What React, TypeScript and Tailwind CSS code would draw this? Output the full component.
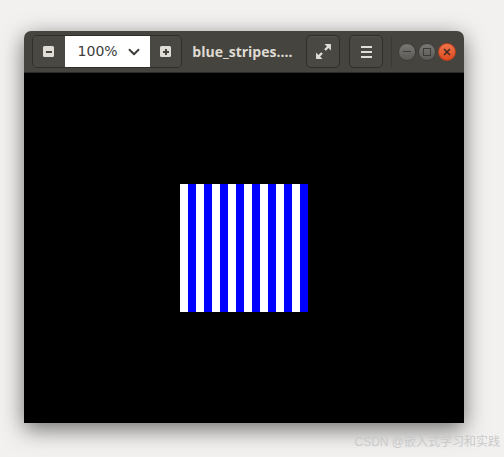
import { ChevronDown } from 'lucide-react';

const stripes = Array.from({ length: 16 }, (_, i) => i);

function ToolButton({ children }: { children: React.ReactNode }) {
  return (
    <div className="w-[34px] h-[33px] rounded-[5px] border border-[#2f2e2a] bg-[#4a4843] shadow-[inset_0_1px_0_rgba(255,255,255,0.06)] flex items-center justify-center">
      {children}
    </div>
  );
}

export default function App() {
  return (
    <div className="w-[504px] h-[457px] bg-[#f2f1f0] relative overflow-hidden font-['DejaVu_Sans',sans-serif]">
      <div className="absolute left-[24px] top-[31px] w-[440px] h-[392px] rounded-t-[7px] shadow-[0_6px_22px_rgba(0,0,0,0.55)] flex flex-col overflow-hidden">
        {/* header bar */}
        <div className="h-[42px] bg-[#45443f] flex items-center pl-[8px] pr-[8px] shrink-0 border-b border-[#2b2a27]">
          <div className="flex h-[33px] rounded-[5px] border border-[#2f2e2a] overflow-hidden">
            <div className="w-[32px] bg-[#4a4843] flex items-center justify-center">
              <div className="w-[11px] h-[11px] rounded-[1.5px] bg-[#e0ddd6] flex items-center justify-center">
                <div className="w-[6px] h-[2px] bg-[#45443f]" />
              </div>
            </div>
            <div className="w-[86px] bg-white flex items-center pl-[13px] pr-[7px] justify-between">
              <span className="text-[14px] text-[#3c3c3c]">100%</span>
              <ChevronDown size={18} strokeWidth={2.5} className="text-[#3c3b37]" />
            </div>
            <div className="w-[32px] bg-[#4a4843] flex items-center justify-center">
              <div className="w-[11px] h-[11px] rounded-[1.5px] bg-[#e0ddd6] relative flex items-center justify-center">
                <div className="w-[6px] h-[2px] bg-[#45443f]" />
                <div className="absolute w-[2px] h-[6px] bg-[#45443f]" />
              </div>
            </div>
          </div>
          <span className="ml-[10px] w-[115px] text-[14px] font-bold text-[#dfdbd2] font-['Open_Sans',sans-serif] whitespace-nowrap">
            blue_stripes....
          </span>
          <div className="flex items-center gap-[9px]">
            <ToolButton>
              <svg width="17" height="17" viewBox="0 0 16 16" fill="#e0ddd6">
                <path d="M9 1h6v6l-2.2-2.2-2.6 2.6-1.6-1.6 2.6-2.6z" />
                <path d="M7 15H1V9l2.2 2.2 2.6-2.6 1.6 1.6-2.6 2.6z" />
              </svg>
            </ToolButton>
            <ToolButton>
              <div className="flex flex-col gap-[3px]">
                <div className="w-[11px] h-[2px] bg-[#e0ddd6]" />
                <div className="w-[11px] h-[2px] bg-[#e0ddd6]" />
                <div className="w-[11px] h-[2px] bg-[#e0ddd6]" />
              </div>
            </ToolButton>
          </div>
          <div className="ml-[8px] w-px h-[30px] bg-[#3a3935]" />
          <div className="ml-[6px] flex items-center gap-[2px]">
            <div className="w-[18px] h-[18px] rounded-full bg-gradient-to-b from-[#7a7874] to-[#5b5a56] border border-[#3d3c38] flex items-center justify-center">
              <div className="w-[8px] h-[1.5px] bg-[#3c3b37]" />
            </div>
            <div className="w-[18px] h-[18px] rounded-full bg-gradient-to-b from-[#7a7874] to-[#5b5a56] border border-[#3d3c38] flex items-center justify-center">
              <div className="w-[8px] h-[8px] border-[1.5px] border-[#3c3b37]" />
            </div>
            <div className="w-[18px] h-[18px] rounded-full bg-gradient-to-b from-[#f0744a] to-[#dc4a1d] border border-[#b8401c] flex items-center justify-center">
              <svg width="8" height="8" viewBox="0 0 8 8" stroke="#3c2a20" strokeWidth="1.5">
                <path d="M1 1l6 6M7 1L1 7" />
              </svg>
            </div>
          </div>
        </div>
        {/* image area */}
        <div className="flex-1 bg-black flex items-center justify-center">
          <div className="flex w-[128px] h-[128px]">
            {stripes.map((i) => (
              <div key={i} className={i % 2 === 0 ? 'w-[8px] h-full bg-white' : 'w-[8px] h-full bg-[#0000ff]'} />
            ))}
          </div>
        </div>
      </div>
      <span className="absolute right-[4px] bottom-[6px] text-[12px] text-[#c9c9c9] font-['Liberation_Sans','Noto_Sans_CJK_SC',sans-serif]">
        CSDN @嵌入式学习和实践
      </span>
    </div>
  );
}
